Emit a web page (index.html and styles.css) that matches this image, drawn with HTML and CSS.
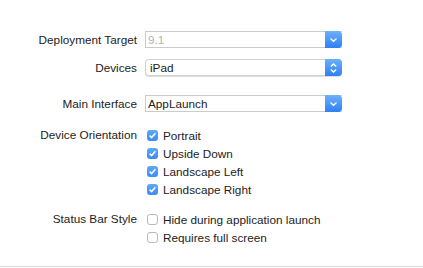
FILE: index.html
```html
<!DOCTYPE html>
<html lang="en">
<head>
  <meta charset="UTF-8">
  <title>Deployment Info</title>
  <link rel="stylesheet" href="styles.css">
</head>
<body>
<div class="panel">
  <div class="row first">
    <div class="label">Deployment Target</div>
    <div class="popup combo disabled">
      <span class="value">9.1</span>
      <span class="arrow">
        <svg width="9" height="6" viewBox="0 0 9 6"><path d="M1.5 1.5 L4.5 4.3 L7.5 1.5" fill="none" stroke="#fff" stroke-width="1.3"/></svg>
      </span>
    </div>
  </div>

  <div class="row devices">
    <div class="label">Devices</div>
    <div class="popup rounded">
      <span class="value">iPad</span>
      <span class="arrow">
        <svg width="9" height="12" viewBox="0 0 9 12"><path d="M1.8 4.5 L4.5 2 L7.2 4.5 M1.8 7.5 L4.5 10 L7.2 7.5" fill="none" stroke="#fff" stroke-width="1.3"/></svg>
      </span>
    </div>
  </div>

  <div class="row main-interface">
    <div class="label">Main Interface</div>
    <div class="popup combo">
      <span class="value">AppLaunch</span>
      <span class="arrow">
        <svg width="9" height="6" viewBox="0 0 9 6"><path d="M1.5 1.5 L4.5 4.3 L7.5 1.5" fill="none" stroke="#fff" stroke-width="1.3"/></svg>
      </span>
    </div>
  </div>

  <div class="row group orientation">
    <div class="label">Device Orientation</div>
    <div class="checks">
      <label class="check on"><span class="box"><svg width="11" height="11" viewBox="0 0 11 11"><path d="M2.6 5.6 L4.6 7.6 L8.4 3.2" fill="none" stroke="#fff" stroke-width="1.5"/></svg></span>Portrait</label>
      <label class="check on"><span class="box"><svg width="11" height="11" viewBox="0 0 11 11"><path d="M2.6 5.6 L4.6 7.6 L8.4 3.2" fill="none" stroke="#fff" stroke-width="1.5"/></svg></span>Upside Down</label>
      <label class="check on"><span class="box"><svg width="11" height="11" viewBox="0 0 11 11"><path d="M2.6 5.6 L4.6 7.6 L8.4 3.2" fill="none" stroke="#fff" stroke-width="1.5"/></svg></span>Landscape Left</label>
      <label class="check on"><span class="box"><svg width="11" height="11" viewBox="0 0 11 11"><path d="M2.6 5.6 L4.6 7.6 L8.4 3.2" fill="none" stroke="#fff" stroke-width="1.5"/></svg></span>Landscape Right</label>
    </div>
  </div>

  <div class="row group status">
    <div class="label">Status Bar Style</div>
    <div class="checks">
      <label class="check"><span class="box"></span>Hide during application launch</label>
      <label class="check"><span class="box"></span>Requires full screen</label>
    </div>
  </div>
</div>
<div class="divider"></div>
</body>
</html>
```

FILE: styles.css
```css
body {
  margin: 0;
  background-color: #fff;
  font-family: "Liberation Sans", Arial, sans-serif;
  font-size: 11.75px;
  color: #222;
}

.panel {
  height: 266px;
  display: flex;
  flex-direction: column;
}

.row {
  display: flex;
  align-items: center;
  gap: 8px;
}

.row.first {
  margin-top: 31px;
}

.row.devices {
  margin-top: 11px;
}

.row.main-interface {
  margin-top: 19px;
}

.row.orientation {
  margin-top: 14px;
}

.row.status {
  margin-top: 12px;
}

.row.group {
  align-items: flex-start;
}

.label {
  width: 137px;
  text-align: right;
  white-space: nowrap;
}

.row.group .label {
  line-height: 18px;
}

/* popup buttons */
.popup {
  width: 197px;
  height: 17px;
  box-sizing: border-box;
  display: flex;
  align-items: center;
  justify-content: space-between;
  border: 1px solid #cbcbcb;
  border-right: none;
  background-color: #fff;
}

.popup .value {
  padding-left: 2px;
}

.popup.rounded {
  border-color: #d2d2d2;
  border-radius: 4px;
  box-shadow: 0 1px 0 #ddd;
}

.popup.rounded .value {
  padding-left: 4px;
}

.popup.disabled .value {
  color: #b4b4b4;
}

.popup .arrow {
  width: 17px;
  height: 17px;
  margin-top: -1px;
  margin-bottom: -1px;
  display: flex;
  align-items: center;
  justify-content: center;
  border-radius: 0 4px 4px 0;
  background: linear-gradient(#6cb1fb, #2f7ff3);
}

/* checkboxes */
.checks {
  display: flex;
  flex-direction: column;
}

.check {
  height: 18px;
  display: flex;
  align-items: center;
  gap: 5px;
  padding-left: 2px;
  white-space: nowrap;
}

.check .box {
  width: 11px;
  height: 11px;
  box-sizing: border-box;
  border: 1px solid #b9b9b9;
  border-radius: 3px;
  background-color: #fff;
  display: flex;
}

.check.on .box {
  border: none;
  background: linear-gradient(#5ea9fa, #3a8bf5);
}

.divider {
  height: 1px;
  background-color: #d9d9d9;
}
```
